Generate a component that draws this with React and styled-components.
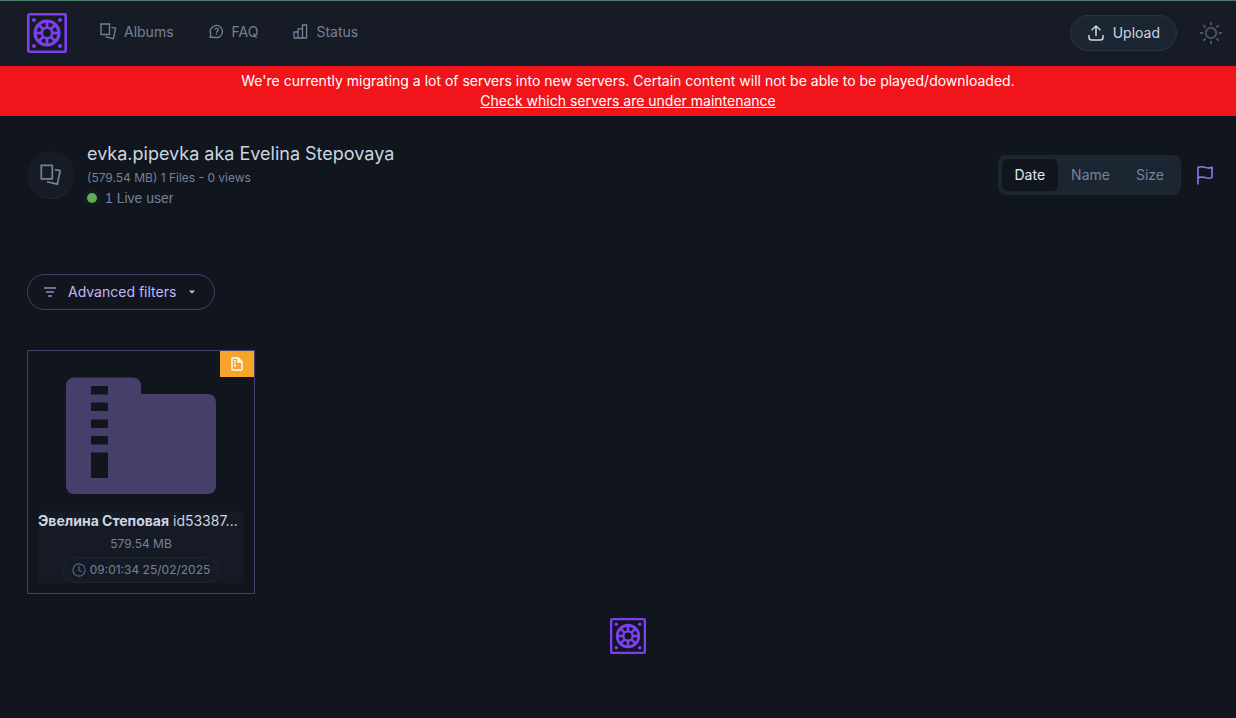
import React from "react";
import styled, { createGlobalStyle } from "styled-components";

const GlobalStyle = createGlobalStyle`
  * { box-sizing: border-box; }
  html { background: #11151d; }
  body {
    margin: 0;
    background: #11151d;
    color: #cbd5e1;
    font-family: Inter, "Noto Sans", sans-serif;
    font-size: 14px;
    line-height: 20px;
  }
  button { font: inherit; cursor: pointer; }
  svg { display: block; flex: none; }
  h1, h2, p { margin: 0; font-weight: 400; }
`;

const Header = styled.header`
  display: flex;
  align-items: center;
  height: 66px;
  padding: 0 13px 2px 27px;
  background: #161b26;
  border-top: 1px solid #4d7c6b;
`;

const HomeLink = styled.a`
  display: block;
  margin-right: 33px;
`;

const Nav = styled.nav`
  display: flex;
  flex: 1;
  gap: 35px;
  padding-bottom: 2px;
`;

const NavLink = styled.a`
  display: flex;
  align-items: center;
  gap: 7px;
  color: #74829a;
  text-decoration: none;
`;

const UploadButton = styled.button`
  display: flex;
  align-items: center;
  gap: 8px;
  height: 36px;
  padding: 0 16px;
  border: 1px solid #2a3444;
  border-radius: 18px;
  background: #1c2532;
  color: #cbd5e1;
`;

const IconButton = styled.button`
  display: flex;
  padding: 0;
  border: 0;
  background: none;
  color: ${(p) => p.$color};
`;

const HeaderActions = styled.div`
  display: flex;
  align-items: center;
  gap: 22px;
`;

const Banner = styled.div`
  padding: 5px 0 5px 20px;
  background: #f1151b;
  color: #fff;
  text-align: center;
  font-size: 14px;

  a { color: inherit; }
`;

const Main = styled.main`
  padding: 26px 7px 64px 27px;
`;

const AlbumHead = styled.section`
  display: flex;
  align-items: center;
  gap: 12px;
  padding-right: 15px;
`;

const Avatar = styled.div`
  display: grid;
  place-items: center;
  width: 48px;
  height: 48px;
  border-radius: 50%;
  border-bottom: 1px solid #1f2937;
  background: #161b26;
  color: #74829a;
`;

const AlbumText = styled.div`
  flex: 1;
  min-width: 0;
`;

const AlbumActions = styled.div`
  display: flex;
  align-items: center;
  gap: 15px;
`;

const Title = styled.h1`
  font-size: 18px;
  line-height: 24px;
  color: #cbd5e1;
`;

const Meta = styled.p`
  padding-top: 2px;
  font-size: 12px;
  line-height: 20px;
  color: #74829a;
`;

const LiveUsers = styled.p`
  display: flex;
  align-items: center;
  gap: 8px;
  font-family: "Liberation Sans", Arial, sans-serif;
  line-height: 20px;
  color: #74829a;
`;

const LiveDot = styled.span`
  width: 10px;
  height: 10px;
  border-radius: 50%;
  background: #5fac54;
  box-shadow: 0 0 0 5px #131a20;
`;

const SortGroup = styled.div`
  display: flex;
  height: 40px;
  padding: 4px;
  border-radius: 8px;
  background: #1c2532;
`;

const SortButton = styled.button`
  padding: 0 13px;
  border: 0;
  border-radius: 6px;
  background: ${(p) => (p.$active ? "#11151d" : "transparent")};
  color: ${(p) => (p.$active ? "#e2e8f0" : "#74829a")};
`;

const FilterButton = styled.button`
  display: flex;
  align-items: center;
  gap: 10px;
  height: 36px;
  margin-top: 66px;
  padding: 0 16px 0 14px;
  border: 1px solid #453f69;
  border-radius: 18px;
  background: transparent;
  color: #c4b5fd;
`;

const Grid = styled.div`
  display: grid;
  grid-template-columns: repeat(auto-fill, 228px);
  gap: 16px;
  margin-top: 40px;
`;

const Card = styled.article`
  position: relative;
  padding: 26px 10px 10px;
  border: 1px solid #453f69;
`;

const TypeBadge = styled.span`
  position: absolute;
  top: 0;
  right: 0;
  display: grid;
  place-items: center;
  width: 34px;
  height: 26px;
  background: #f6a52b;
  color: #fff;
`;

const Folder = styled.svg`
  margin: 0 auto 16px;
`;

const FileInfo = styled.div`
  display: flex;
  flex-direction: column;
  align-items: center;
  background: #151a25;
  color: #74829a;
  font-size: 12px;
`;

const FileName = styled.h2`
  width: 100%;
  overflow: hidden;
  font-size: 14px;
  line-height: 20px;
  color: #cbd5e1;
  text-overflow: ellipsis;
  white-space: nowrap;
`;

const FileSize = styled.p`
  padding: 3px 0;
`;

const FileDate = styled.p`
  display: flex;
  align-items: center;
  gap: 4px;
  height: 26px;
  padding: 0 8px;
  border: 1px solid #1c2532;
  border-radius: 13px;
`;

const Footer = styled.footer`
  display: flex;
  justify-content: center;
  margin-top: 24px;
`;

function Logo({ size }) {
  const spokes = [0, 45, 90, 135, 180, 225, 270, 315];
  return (
    <svg width={size} height={size} viewBox="0 0 40 40" fill="none" stroke="#7c3fee" aria-hidden="true">
      <rect x="1.3" y="1.3" width="37.4" height="37.4" rx="1" strokeWidth="2.6" />
      <circle cx="20" cy="20" r="12" strokeWidth="3.2" />
      <circle cx="20" cy="20" r="5.2" strokeWidth="2.6" />
      {spokes.map((a) => (
        <path key={a} d="M20 15V8" strokeWidth="2.8" transform={`rotate(${a} 20 20)`} />
      ))}
      <g fill="#7c3fee" stroke="none">
        <circle cx="7" cy="7" r="2" />
        <circle cx="33" cy="7" r="2" />
        <circle cx="7" cy="33" r="2" />
        <circle cx="33" cy="33" r="2" />
      </g>
    </svg>
  );
}

function AlbumsIcon({ width = 17, height = 17 }) {
  return (
    <svg width={width} height={height} viewBox="0 0 17 17" fill="none" stroke="currentColor" strokeWidth="1.3" aria-hidden="true">
      <path d="M1 1H9.5V11.5H1ZM11.5 4.3L15.6 5.2L13.4 15.6L5.3 13.7" />
    </svg>
  );
}

function FaqIcon() {
  return (
    <svg width="16" height="15" viewBox="0 0 16 15" fill="none" stroke="currentColor" strokeWidth="1.3" aria-hidden="true">
      <path d="M1 13.3L1.9 10.3A6.1 6.1 0 1 1 5 13.2Z" strokeLinejoin="round" />
      <path d="M5.8 5.4C6.2 3.9 9.4 4 9.3 5.9C9.2 7.1 7.6 7.1 7.6 8.7M7.6 9.6V10.7" />
    </svg>
  );
}

function StatusIcon() {
  return (
    <svg width="16" height="15" viewBox="0 0 16 15" fill="none" stroke="currentColor" strokeWidth="1.3" strokeLinejoin="round" aria-hidden="true">
      <path d="M1 8H5V14H1ZM5 4.8H9.5V14H5ZM9.5 1H13.6V14H9.5Z" />
    </svg>
  );
}

function UploadIcon() {
  return (
    <svg width="18" height="18" viewBox="0 0 18 18" fill="none" stroke="currentColor" strokeWidth="1.5" strokeLinecap="round" strokeLinejoin="round" aria-hidden="true">
      <path d="M9 11.5V2M5 5.8L9 2L13 5.8M2 11.5V13.5Q2 16 4.5 16H13.5Q16 16 16 13.5V11.5" />
    </svg>
  );
}

function SunIcon() {
  return (
    <svg width="24" height="24" viewBox="0 0 24 24" fill="none" stroke="currentColor" strokeWidth="1.9" aria-hidden="true">
      <circle cx="12" cy="12" r="5.2" />
      <path d="M12 1V4.3M12 19.7V23M1 12H4.3M19.7 12H23M4.2 4.2L6.6 6.6M17.4 17.4L19.8 19.8M4.2 19.8L6.6 17.4M17.4 6.6L19.8 4.2" />
    </svg>
  );
}

function FlagIcon() {
  return (
    <svg width="18" height="20" viewBox="0 0 18 20" fill="none" stroke="currentColor" strokeWidth="1.5" strokeLinecap="round" strokeLinejoin="round" aria-hidden="true">
      <path d="M2 19V2.3C6 .8 8.2 2 9.8 2.6C12 3.4 14 3 16 2.2V12.6C13.5 13.6 11.5 13.4 9.5 12.6C7.5 11.8 5 11.6 2 12.7" />
    </svg>
  );
}

function FilterIcon() {
  return (
    <svg width="16" height="16" viewBox="0 0 16 16" fill="none" stroke="#9389b9" strokeWidth="1.6" aria-hidden="true">
      <path d="M2 4H14M4 8H12M6 12H10" />
    </svg>
  );
}

function CaretIcon() {
  return (
    <svg width="12" height="12" viewBox="0 0 12 12" fill="currentColor" aria-hidden="true">
      <path d="M3 4.6H9L6 7.7Z" />
    </svg>
  );
}

function ZipIcon() {
  return (
    <svg width="12" height="14" viewBox="0 0 12 14" fill="none" stroke="currentColor" strokeWidth="1.4" strokeLinejoin="round" aria-hidden="true">
      <path d="M2 1H7L11 5V12Q11 13 10 13H2Q1 13 1 12V2Q1 1 2 1Z" />
      <path d="M7 1V5H11Z" fill="currentColor" />
      <path d="M3 3.6H5M3 5.8H5M3 8.4H5M4 7.6V10" strokeWidth="1.1" />
    </svg>
  );
}

function ClockIcon() {
  return (
    <svg width="14" height="14" viewBox="0 0 14 14" fill="none" stroke="#566276" strokeWidth="1.2" aria-hidden="true">
      <circle cx="7" cy="7" r="6.1" />
      <path d="M7 3V7.3L9.8 8.8" />
    </svg>
  );
}

const navItems = [
  { label: "Albums", Icon: AlbumsIcon },
  { label: "FAQ", Icon: FaqIcon },
  { label: "Status", Icon: StatusIcon },
];

const sorts = ["Date", "Name", "Size"];

export default function App() {
  const [sort, setSort] = React.useState("Date");
  return (
    <>
      <GlobalStyle />
      <Header>
        <HomeLink href="#" aria-label="Home">
          <Logo size={40} />
        </HomeLink>
        <Nav>
          {navItems.map(({ label, Icon }) => (
            <NavLink key={label} href="#">
              <Icon />
              {label}
            </NavLink>
          ))}
        </Nav>
        <HeaderActions>
          <UploadButton type="button">
            <UploadIcon />
            Upload
          </UploadButton>
          <IconButton type="button" aria-label="Toggle theme" $color="#4b5567">
            <SunIcon />
          </IconButton>
        </HeaderActions>
      </Header>
      <Banner>
        We're currently migrating a lot of servers into new servers. Certain content will not be able to be
        played/downloaded.
        <br />
        <a href="#">Check which servers are under maintenance</a>
      </Banner>
      <Main>
        <AlbumHead>
          <Avatar>
            <AlbumsIcon width={22} height={22} />
          </Avatar>
          <AlbumText>
            <Title>evka.pipevka aka Evelina Stepovaya</Title>
            <Meta>(579.54 MB) 1 Files - 0 views</Meta>
            <LiveUsers>
              <LiveDot />1 Live user
            </LiveUsers>
          </AlbumText>
          <AlbumActions>
            <SortGroup role="group" aria-label="Sort by">
              {sorts.map((name) => (
                <SortButton
                  key={name}
                  type="button"
                  aria-pressed={sort === name}
                  $active={sort === name}
                  onClick={() => setSort(name)}
                >
                  {name}
                </SortButton>
              ))}
            </SortGroup>
            <IconButton type="button" aria-label="Report album" $color="#9b7cf5">
              <FlagIcon />
            </IconButton>
          </AlbumActions>
        </AlbumHead>
        <FilterButton type="button">
          <FilterIcon />
          Advanced filters
          <CaretIcon />
        </FilterButton>
        <Grid>
          <Card>
            <TypeBadge>
              <ZipIcon />
            </TypeBadge>
            <Folder width="150" height="118" viewBox="0 0 150 118" aria-hidden="true">
              <path
                fill="#453f69"
                fillRule="evenodd"
                d="M9 .5H66Q75 .5 75 9.500V17H141Q150 17 150 26V108.500Q150 117 141 117H9Q0 117 0 108.500V9.500Q0 .5 9 .5ZM25 9V17.500H42V9ZM25 25.500V34H42V25.500ZM25 42.500V51H42V42.500ZM25 59V67.500H42V59ZM25 75.500V101H42V75.500Z"
              />
            </Folder>
            <FileInfo>
              <FileName>
                <b>Эвелина Степовая</b> id53387...
              </FileName>
              <FileSize>579.54 MB</FileSize>
              <FileDate>
                <ClockIcon />
                09:01:34 25/02/2025
              </FileDate>
            </FileInfo>
          </Card>
        </Grid>
        <Footer>
          <Logo size={36} />
        </Footer>
      </Main>
    </>
  );
}
